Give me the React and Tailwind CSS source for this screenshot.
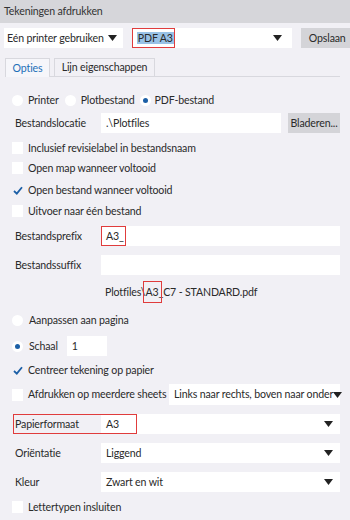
const FONT = { fontFamily: 'Lato, "Noto Sans", sans-serif' };

function Caret() {
  return (
    <svg width="9" height="6" viewBox="0 0 9 6" className="shrink-0">
      <path d="M0 0 H9 L4.5 6 Z" fill="#222" />
    </svg>
  );
}

function Radio({ checked }) {
  return (
    <span className="w-[11px] h-[11px] rounded-full bg-white flex items-center justify-center shrink-0">
      {checked && <span className="w-[5px] h-[5px] rounded-full bg-[#1c5fa6]" />}
    </span>
  );
}

function Check({ checked, label, className = "" }) {
  return (
    <div className={`flex items-center h-[20px] pl-[12px] ${className}`}>
      <span
        className={`w-[11px] h-[12px] flex items-center justify-center shrink-0 ${
          checked ? "" : "bg-white"
        }`}
      >
        {checked && (
          <svg width="10" height="9" viewBox="0 0 10 9">
            <path d="M1 5 L3.8 7.6 L9 1.2" stroke="#1c5fa6" strokeWidth="1.8" fill="none" />
          </svg>
        )}
      </span>
      <span className="ml-[5px]">{label}</span>
    </div>
  );
}

function FieldRow({ label, className = "", children }) {
  return (
    <div className={`flex items-center h-[20px] ${className}`}>
      <span className="w-[101px] pl-[15px] shrink-0">{label}</span>
      {children}
    </div>
  );
}

function Select({ value, className = "" }) {
  return (
    <div className={`h-full bg-white flex items-center justify-between pl-[5px] pr-[7px] ${className}`}>
      <span>{value}</span>
      <Caret />
    </div>
  );
}

export default function App() {
  return (
    <div
      className="w-[350px] h-[520px] overflow-hidden bg-[#f1f0f5] text-[10.6px] tracking-[-0.15px] text-[#2a2a2a] leading-none whitespace-nowrap"
      style={FONT}
    >
      <div className="h-[23px] bg-[#d6d6da] flex items-center pl-[4px] text-[#333]">
        Tekeningen afdrukken
      </div>

      <div className="flex h-[20px] mt-[5px]">
        <div className="ml-[4px] w-[121px] h-full bg-white flex items-center justify-between pl-[3px] pr-[6px]">
          <span>Eén printer gebruiken</span>
          <Caret />
        </div>
        <div className="ml-[9px] w-[163px] h-full bg-white flex items-center justify-between pr-[10px] relative">
          <span className="absolute left-0 top-0 w-[43px] h-[20px] border-[1.5px] border-[#e03c3c]" />
          <span className="ml-[5px] bg-[#99c2e6] px-[1px] py-[1px]">PDF A3</span>
          <Caret />
        </div>
        <div className="ml-[9px] w-[50px] h-full bg-[#d4d4d8] flex items-center pl-[8px]">
          Opslaan
        </div>
      </div>

      <div className="mt-[10px] ml-[5px] mr-[10px] h-[19px] flex items-end border-b border-[#d8d8de]">
        <div className="w-[45px] h-[19px] border border-b-0 border-[#d8d8de] bg-[#f6f6fa] flex items-center justify-center text-[#1d6fb8] -mb-px relative z-10">
          Opties
        </div>
        <div className="ml-[4px] w-[101px] h-[18px] border border-b-0 border-[#d8d8de] flex items-center justify-center">
          Lijn eigenschappen
        </div>
      </div>

      <div className="flex items-center h-[20px] mt-[13px] pl-[12px]">
        <Radio />
        <span className="ml-[5px]">Printer</span>
        <span className="ml-[6px]"><Radio /></span>
        <span className="ml-[5px]">Plotbestand</span>
        <span className="ml-[5px]"><Radio checked /></span>
        <span className="ml-[4px]">PDF-bestand</span>
      </div>

      <FieldRow label="Bestandslocatie" className="mt-[3px]">
        <div className="w-[180px] h-full bg-white flex items-center pl-[5px]">.\Plotfiles</div>
        <div className="ml-[7px] w-[52px] h-full bg-[#d4d4d8] flex items-center justify-center">
          Bladeren...
        </div>
      </FieldRow>

      <Check label="Inclusief revisielabel in bestandsnaam" className="mt-[5px]" />
      <Check label="Open map wanneer voltooid" />
      <Check checked label="Open bestand wanneer voltooid" className="mt-[2px]" />
      <Check label="Uitvoer naar één bestand" className="mt-[1px]" />

      <FieldRow label="Bestandsprefix" className="mt-[5px]">
        <div className="w-[239px] h-full bg-white flex items-center relative">
          <span className="absolute left-0 top-0 w-[25px] h-[20px] border-[1.5px] border-[#e03c3c]" />
          <span className="ml-[5px]">A3_</span>
        </div>
      </FieldRow>
      <FieldRow label="Bestandssuffix" className="mt-[9px]">
        <div className="w-[239px] h-full bg-white" />
      </FieldRow>

      <div className="h-[18px] mt-[8px] flex items-center pl-[105px]">
        <span>Plotfiles\</span>
        <span className="relative">
          <span className="absolute -left-[2px] -top-[6px] w-[19px] h-[22px] border-[1.5px] border-[#e03c3c]" />
          A3_
        </span>
        <span>C7 - STANDARD.pdf</span>
      </div>

      <div className="flex items-center h-[20px] mt-[9px] pl-[12px]">
        <Radio />
        <span className="ml-[6px]">Aanpassen aan pagina</span>
      </div>

      <div className="flex items-center h-[20px] mt-[6px] pl-[12px]">
        <Radio checked />
        <span className="ml-[6px]">Schaal</span>
        <div className="ml-[9px] w-[40px] h-full bg-white flex items-center pl-[5px]">1</div>
      </div>

      <Check checked label="Centreer tekening op papier" className="mt-[4px]" />

      <div className="flex items-center h-[21px] mt-[4px]">
        <Check label="Afdrukken op meerdere sheets" className="w-[169px]" />
        <Select value="Links naar rechts, boven naar onder" className="w-[171px] pl-[4px] pr-[6px]" />
      </div>

      <FieldRow label="Papierformaat" className="mt-[9px] relative">
        <span className="absolute left-[13px] top-0 w-[124px] h-[20px] border-[1.5px] border-[#e03c3c] z-10" />
        <Select value="A3" className="w-[239px]" />
      </FieldRow>
      <FieldRow label="Oriëntatie" className="mt-[9px]">
        <Select value="Liggend" className="w-[239px]" />
      </FieldRow>
      <FieldRow label="Kleur" className="mt-[9px]">
        <Select value="Zwart en wit" className="w-[239px]" />
      </FieldRow>

      <Check label="Lettertypen insluiten" className="mt-[5px]" />
    </div>
  );
}
